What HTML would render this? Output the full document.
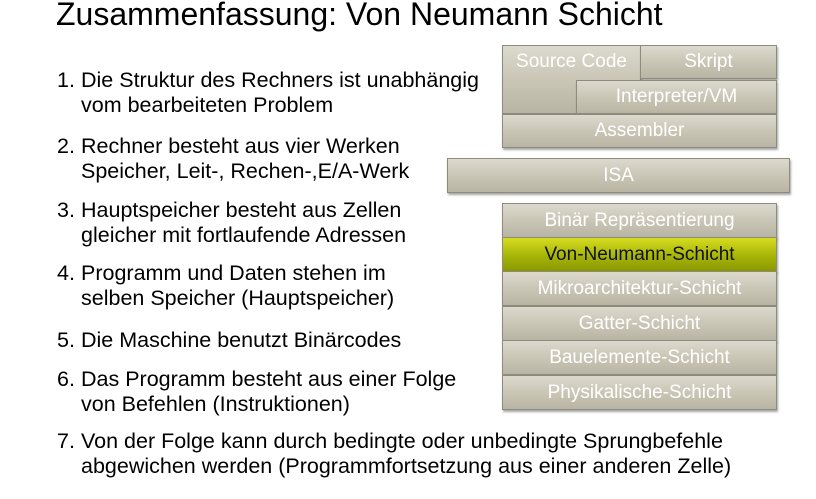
<!DOCTYPE html>
<html><head><meta charset="utf-8"><style>
body{margin:0;width:816px;height:499px;background:#fff;position:relative;overflow:hidden;font-family:"Liberation Sans",Arial,sans-serif;}
.t{position:absolute;left:56px;top:-4px;font-size:32px;color:#000;white-space:nowrap}
.l{position:absolute;font-size:21.5px;line-height:25px;color:#000;white-space:nowrap}
.n{position:absolute;left:57px}
.x{position:absolute;left:81px}
.b{position:absolute;box-sizing:border-box;background:linear-gradient(#dcdace,#c9c6b6 50%,#b8b5a4);border:1px solid #8e8b7c;box-shadow:1px 2px 2px rgba(0,0,0,.35);color:#fff;font-size:19px;text-align:center;white-space:nowrap}
.g{background:linear-gradient(#d6dc20,#aab80a 50%,#8a9800);color:#111}
</style></head><body>
<div class="t">Zusammenfassung: Von Neumann Schicht</div>

<div class="l" style="top:68px"><span class="n">1.</span><span class="x">Die Struktur des Rechners ist unabhängig<br>vom bearbeiteten Problem</span></div>
<div class="l" style="top:134px"><span class="n">2.</span><span class="x">Rechner besteht aus vier Werken<br>Speicher, Leit-, Rechen-,E/A-Werk</span></div>
<div class="l" style="top:198px"><span class="n">3.</span><span class="x">Hauptspeicher besteht aus Zellen<br>gleicher mit fortlaufende Adressen</span></div>
<div class="l" style="top:261px"><span class="n">4.</span><span class="x">Programm und Daten stehen im<br>selben Speicher (Hauptspeicher)</span></div>
<div class="l" style="top:328px"><span class="n">5.</span><span class="x">Die Maschine benutzt Binärcodes</span></div>
<div class="l" style="top:367px"><span class="n">6.</span><span class="x">Das Programm besteht aus einer Folge<br>von Befehlen (Instruktionen)</span></div>
<div class="l" style="top:429px"><span class="n">7.</span><span class="x">Von der Folge kann durch bedingte oder unbedingte Sprungbefehle<br>abgewichen werden (Programmfortsetzung aus einer anderen Zelle)</span></div>

<div class="b" style="left:502px;top:45px;width:139px;height:69px;line-height:32px">Source Code</div>
<div class="b" style="left:640px;top:45px;width:137px;height:34px;line-height:32px">Skript</div>
<div class="b" style="left:576px;top:80px;width:201px;height:34px;line-height:32px">Interpreter/VM</div>
<div class="b" style="left:502px;top:114px;width:275px;height:34px;line-height:32px">Assembler</div>
<div class="b" style="left:447px;top:158px;width:343px;height:35px;line-height:34px">ISA</div>

<div class="b" style="left:502px;top:203px;width:275px;height:35px;line-height:33px">Binär Repräsentierung</div>
<div class="b g" style="left:502px;top:237px;width:275px;height:35px;line-height:33px">Von-Neumann-Schicht</div>
<div class="b" style="left:502px;top:271px;width:275px;height:35px;line-height:33px">Mikroarchitektur-Schicht</div>
<div class="b" style="left:502px;top:306px;width:275px;height:35px;line-height:33px">Gatter-Schicht</div>
<div class="b" style="left:502px;top:340px;width:275px;height:35px;line-height:33px">Bauelemente-Schicht</div>
<div class="b" style="left:502px;top:375px;width:275px;height:35px;line-height:33px">Physikalische-Schicht</div>
</body></html>
